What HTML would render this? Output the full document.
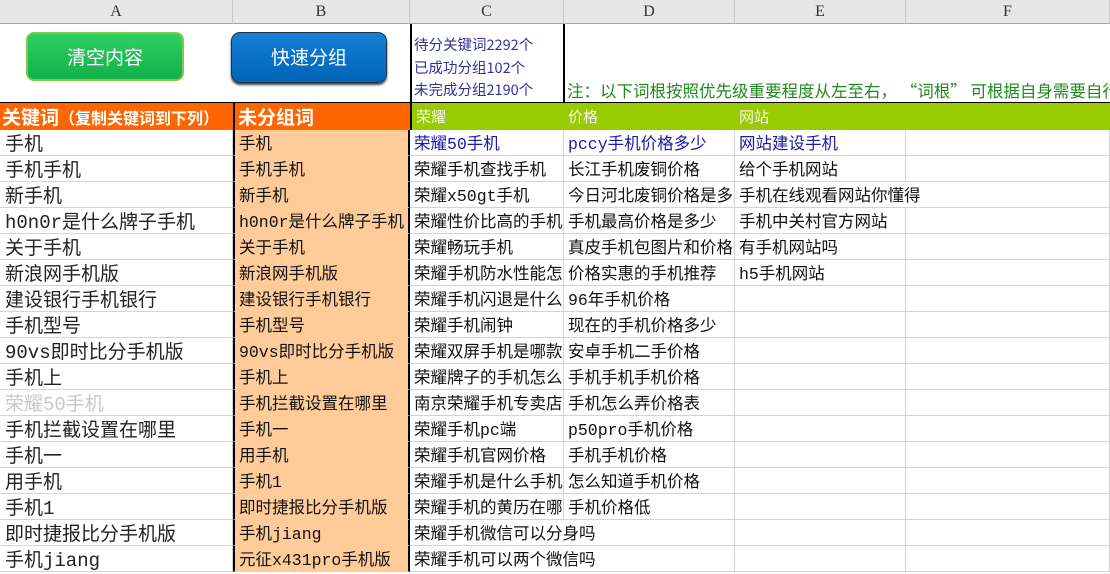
<!DOCTYPE html>
<html><head><meta charset="utf-8"><style>
*{margin:0;padding:0;box-sizing:border-box}
body{width:1110px;height:574px;overflow:hidden;background:#fff;font-family:"Liberation Mono","Noto Sans CJK SC",monospace;position:relative}
.a{position:absolute;white-space:nowrap;overflow:hidden}
.hdr{top:0;height:24px;background:#e6e6e6;border-right:1px solid #c8c8c8;border-bottom:1px solid #a8a8a8;text-align:center;font:16px/24px "Liberation Serif",serif;color:#333}
.row{position:absolute;left:0;width:1110px;height:26px}
.c{position:absolute;top:0;height:26px;border-right:1px solid #d4d4d4;border-bottom:1px solid #d4d4d4;white-space:nowrap;overflow:hidden;font-size:16.5px;line-height:30px;color:#111;padding-left:4px}
.A{left:0;width:233px;font-size:19px;color:#222;padding-left:5px}
.B{left:233px;width:177px;background:#ffcc99;border-left:2px solid #000;border-right:2px solid #000}
.C{left:410px;width:154px}
.D{left:564px;width:171px}
.E{left:735px;width:171px}
.F{left:906px;width:204px}
.blue{color:#1a1aa6}
</style></head><body>
<div class="a hdr" style="left:0;width:233px">A</div>
<div class="a hdr" style="left:233px;width:177px">B</div>
<div class="a hdr" style="left:410px;width:154px">C</div>
<div class="a hdr" style="left:564px;width:171px">D</div>
<div class="a hdr" style="left:735px;width:171px">E</div>
<div class="a hdr" style="left:906px;width:204px">F</div>

<div class="a" style="left:26px;top:32px;width:158px;height:49px;border-radius:8px;background:linear-gradient(#2fd065,#12b04a);border:2px solid #7fc94a;color:#fff;font:19px/45px 'Noto Sans CJK SC',sans-serif;text-align:center">清空内容</div>
<div class="a" style="left:231px;top:32px;width:156px;height:51px;border-radius:9px;background:linear-gradient(#1380d6,#0064b8);border:1px solid #234;box-shadow:0 2px 2px #345;color:#fff;font:19px/48px 'Noto Sans CJK SC',sans-serif;text-align:center">快速分组</div>
<div class="a" style="left:410px;top:24px;width:2px;height:79px;background:#000"></div>
<div class="a" style="left:563px;top:24px;width:2px;height:79px;background:#000"></div>
<div class="a" style="left:414px;top:34px;font:14.5px/22.5px 'Noto Sans CJK SC',sans-serif;color:#333399;white-space:normal">待分关键词2292个<br>已成功分组102个<br>未完成分组2190个</div>
<div class="a" style="left:567px;top:78px;width:543px;font:16.5px/24px 'Noto Sans CJK SC',sans-serif;color:#1f8a1f">注：以下词根按照优先级重要程度从左至右， “词根” 可根据自身需要自行修改</div>
<div class="a" style="left:0;top:102px;width:1110px;height:1px;background:#000"></div>

<div class="a" style="left:0;top:103px;width:233px;height:27px;background:#ff6600;color:#fff;font:bold 19px/27px 'Noto Sans CJK SC',sans-serif;padding-left:2px">关键词<span style="font-size:16px">（复制关键词到下列）</span></div>
<div class="a" style="left:233px;top:103px;width:177px;height:27px;background:#ff6600;color:#fff;font:bold 19px/27px 'Noto Sans CJK SC',sans-serif;padding-left:3px;border-left:2px solid #000">未分组词</div>
<div class="a" style="left:410px;top:103px;width:700px;height:27px;background:#99cc00;color:#f4f4f4;font:15px/27px 'Noto Sans CJK SC',sans-serif;border-left:2px solid #000"><span style="position:absolute;left:4px">荣耀</span><span style="position:absolute;left:156px">价格</span><span style="position:absolute;left:327px">网站</span></div>

<div class="row" style="top:130px"><div class="c A">手机</div><div class="c B">手机</div><div class="c C blue">荣耀50手机</div><div class="c D blue">pccy手机价格多少</div><div class="c E blue">网站建设手机</div><div class="c F"></div></div>
<div class="row" style="top:156px"><div class="c A">手机手机</div><div class="c B">手机手机</div><div class="c C">荣耀手机查找手机</div><div class="c D">长江手机废铜价格</div><div class="c E">给个手机网站</div><div class="c F"></div></div>
<div class="row" style="top:182px"><div class="c A">新手机</div><div class="c B">新手机</div><div class="c C">荣耀x50gt手机</div><div class="c D">今日河北废铜价格是多少</div><div class="c E" style="width:375px">手机在线观看网站你懂得</div></div>
<div class="row" style="top:208px"><div class="c A">h0n0r是什么牌子手机</div><div class="c B">h0n0r是什么牌子手机</div><div class="c C">荣耀性价比高的手机</div><div class="c D">手机最高价格是多少</div><div class="c E">手机中关村官方网站</div><div class="c F"></div></div>
<div class="row" style="top:234px"><div class="c A">关于手机</div><div class="c B">关于手机</div><div class="c C">荣耀畅玩手机</div><div class="c D">真皮手机包图片和价格</div><div class="c E">有手机网站吗</div><div class="c F"></div></div>
<div class="row" style="top:260px"><div class="c A">新浪网手机版</div><div class="c B">新浪网手机版</div><div class="c C">荣耀手机防水性能怎么样</div><div class="c D">价格实惠的手机推荐</div><div class="c E">h5手机网站</div><div class="c F"></div></div>
<div class="row" style="top:286px"><div class="c A">建设银行手机银行</div><div class="c B">建设银行手机银行</div><div class="c C">荣耀手机闪退是什么原因</div><div class="c D">96年手机价格</div><div class="c E"></div><div class="c F"></div></div>
<div class="row" style="top:312px"><div class="c A">手机型号</div><div class="c B">手机型号</div><div class="c C">荣耀手机闹钟</div><div class="c D">现在的手机价格多少</div><div class="c E"></div><div class="c F"></div></div>
<div class="row" style="top:338px"><div class="c A">90vs即时比分手机版</div><div class="c B">90vs即时比分手机版</div><div class="c C">荣耀双屏手机是哪款</div><div class="c D">安卓手机二手价格</div><div class="c E"></div><div class="c F"></div></div>
<div class="row" style="top:364px"><div class="c A">手机上</div><div class="c B">手机上</div><div class="c C">荣耀牌子的手机怎么样</div><div class="c D">手机手机手机价格</div><div class="c E"></div><div class="c F"></div></div>
<div class="row" style="top:390px"><div class="c A" style="color:#c8c8c8">荣耀50手机</div><div class="c B">手机拦截设置在哪里</div><div class="c C">南京荣耀手机专卖店</div><div class="c D">手机怎么弄价格表</div><div class="c E"></div><div class="c F"></div></div>
<div class="row" style="top:416px"><div class="c A">手机拦截设置在哪里</div><div class="c B">手机一</div><div class="c C">荣耀手机pc端</div><div class="c D">p50pro手机价格</div><div class="c E"></div><div class="c F"></div></div>
<div class="row" style="top:442px"><div class="c A">手机一</div><div class="c B">用手机</div><div class="c C">荣耀手机官网价格</div><div class="c D">手机手机价格</div><div class="c E"></div><div class="c F"></div></div>
<div class="row" style="top:468px"><div class="c A">用手机</div><div class="c B">手机1</div><div class="c C">荣耀手机是什么手机</div><div class="c D">怎么知道手机价格</div><div class="c E"></div><div class="c F"></div></div>
<div class="row" style="top:494px"><div class="c A">手机1</div><div class="c B">即时捷报比分手机版</div><div class="c C">荣耀手机的黄历在哪里</div><div class="c D">手机价格低</div><div class="c E"></div><div class="c F"></div></div>
<div class="row" style="top:520px"><div class="c A">即时捷报比分手机版</div><div class="c B">手机jiang</div><div class="c C" style="width:325px">荣耀手机微信可以分身吗</div><div class="c E"></div><div class="c F"></div></div>
<div class="row" style="top:546px"><div class="c A">手机jiang</div><div class="c B">元征x431pro手机版</div><div class="c C" style="width:325px">荣耀手机可以两个微信吗</div><div class="c E"></div><div class="c F"></div></div>
</body></html>
